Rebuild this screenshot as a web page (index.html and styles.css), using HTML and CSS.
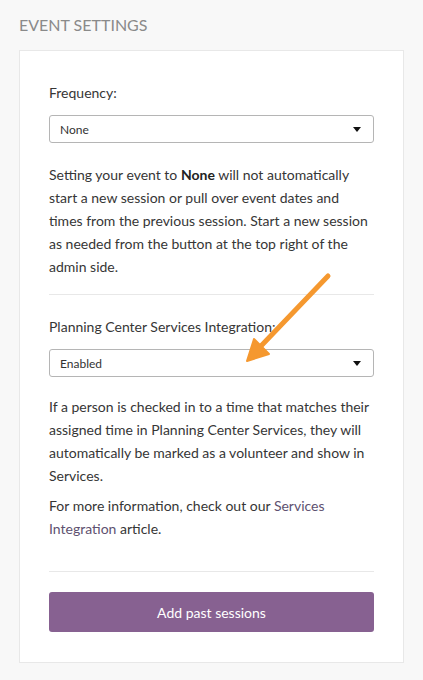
FILE: index.html
```html
<!DOCTYPE html>
<html>
<head>
<meta charset="utf-8">
<link rel="stylesheet" href="styles.css">
</head>
<body>
<h2 class="page-title">EVENT SETTINGS</h2>
<div class="card">
  <div class="field">
    <label class="field-label">Frequency:</label>
    <div class="select"><span>None</span><span class="caret"></span></div>
  </div>
  <p class="help">Setting your event to <strong>None</strong> will not automatically start a new session or pull over event dates and times from the previous session. Start a new session as needed from the button at the top right of the admin side.</p>
  <hr class="divider divider-1">
  <div class="field">
    <label class="field-label">Planning Center Services Integration:</label>
    <div class="select"><span>Enabled</span><span class="caret"></span></div>
  </div>
  <p class="help help-2">If a person is checked in to a time that matches their assigned time in Planning Center Services, they will automatically be marked as a volunteer and show in Services.</p>
  <p class="help help-tight">For more information, check out our <a class="link" href="#">Services Integration</a> article.</p>
  <hr class="divider divider-2">
  <button class="btn">Add past sessions</button>
</div>
<svg class="arrow" width="100" height="105" viewBox="0 0 100 105">
  <line x1="88" y1="11" x2="21" y2="81" stroke="#f5982f" stroke-width="5" stroke-linecap="round"/>
  <polygon points="7,96 29,89 14,74" fill="#f5982f" stroke="#f5982f" stroke-width="2" stroke-linejoin="round"/>
</svg>
</body>
</html>
```

FILE: styles.css
```css
* { box-sizing: border-box; }
html, body { margin: 0; padding: 0; }
body {
  background: #f8f8f8;
  font-family: Lato, "Open Sans", sans-serif;
  color: #363636;
  width: 423px;
  min-height: 680px;
  position: relative;
}
.page-title {
  margin: 0;
  padding: 15px 19px 0;
  font-size: 16px;
  font-weight: 400;
  line-height: 20px;
  color: #8a8a8a;
}
.card {
  margin: 15px 19px 0;
  background: #fff;
  border: 1px solid #e8e8e8;
  padding: 30px 29px 30px;
}
.field { display: flex; flex-direction: column; gap: 10px; }
.field-label {
  font-size: 14px;
  line-height: 24px;
  color: #363636;
}
.select {
  height: 28px;
  border: 1px solid #b5b5b5;
  border-radius: 3px;
  display: flex;
  align-items: center;
  justify-content: space-between;
  padding: 0 12px 0 10px;
  font-size: 12px;
  color: #333;
  background: #fff;
}
.caret {
  width: 0; height: 0;
  border-left: 4px solid transparent;
  border-right: 4px solid transparent;
  border-top: 5px solid #111;
}
.help {
  margin: 20px 0 0;
  font-size: 14px;
  line-height: 23px;
  color: #363636;
}
.help-2 { margin-top: 18px; }
.help strong { font-weight: 700; color: #222; }
.help-tight { margin-top: 7px; }
.link { color: #5e5170; text-decoration: none; }
.divider {
  border: 0;
  border-top: 1px solid #e8e8e8;
  margin: 16px 0 20px;
}
.divider-2 { margin-top: 31px; }
.btn {
  display: block;
  width: 100%;
  height: 40px;
  border: 0;
  border-radius: 3px;
  background: #876191;
  color: #fff;
  font-family: Lato, "Open Sans", sans-serif;
  font-size: 14px;
}
.arrow {
  position: absolute;
  left: 240px;
  top: 265px;
  pointer-events: none;
}
```
